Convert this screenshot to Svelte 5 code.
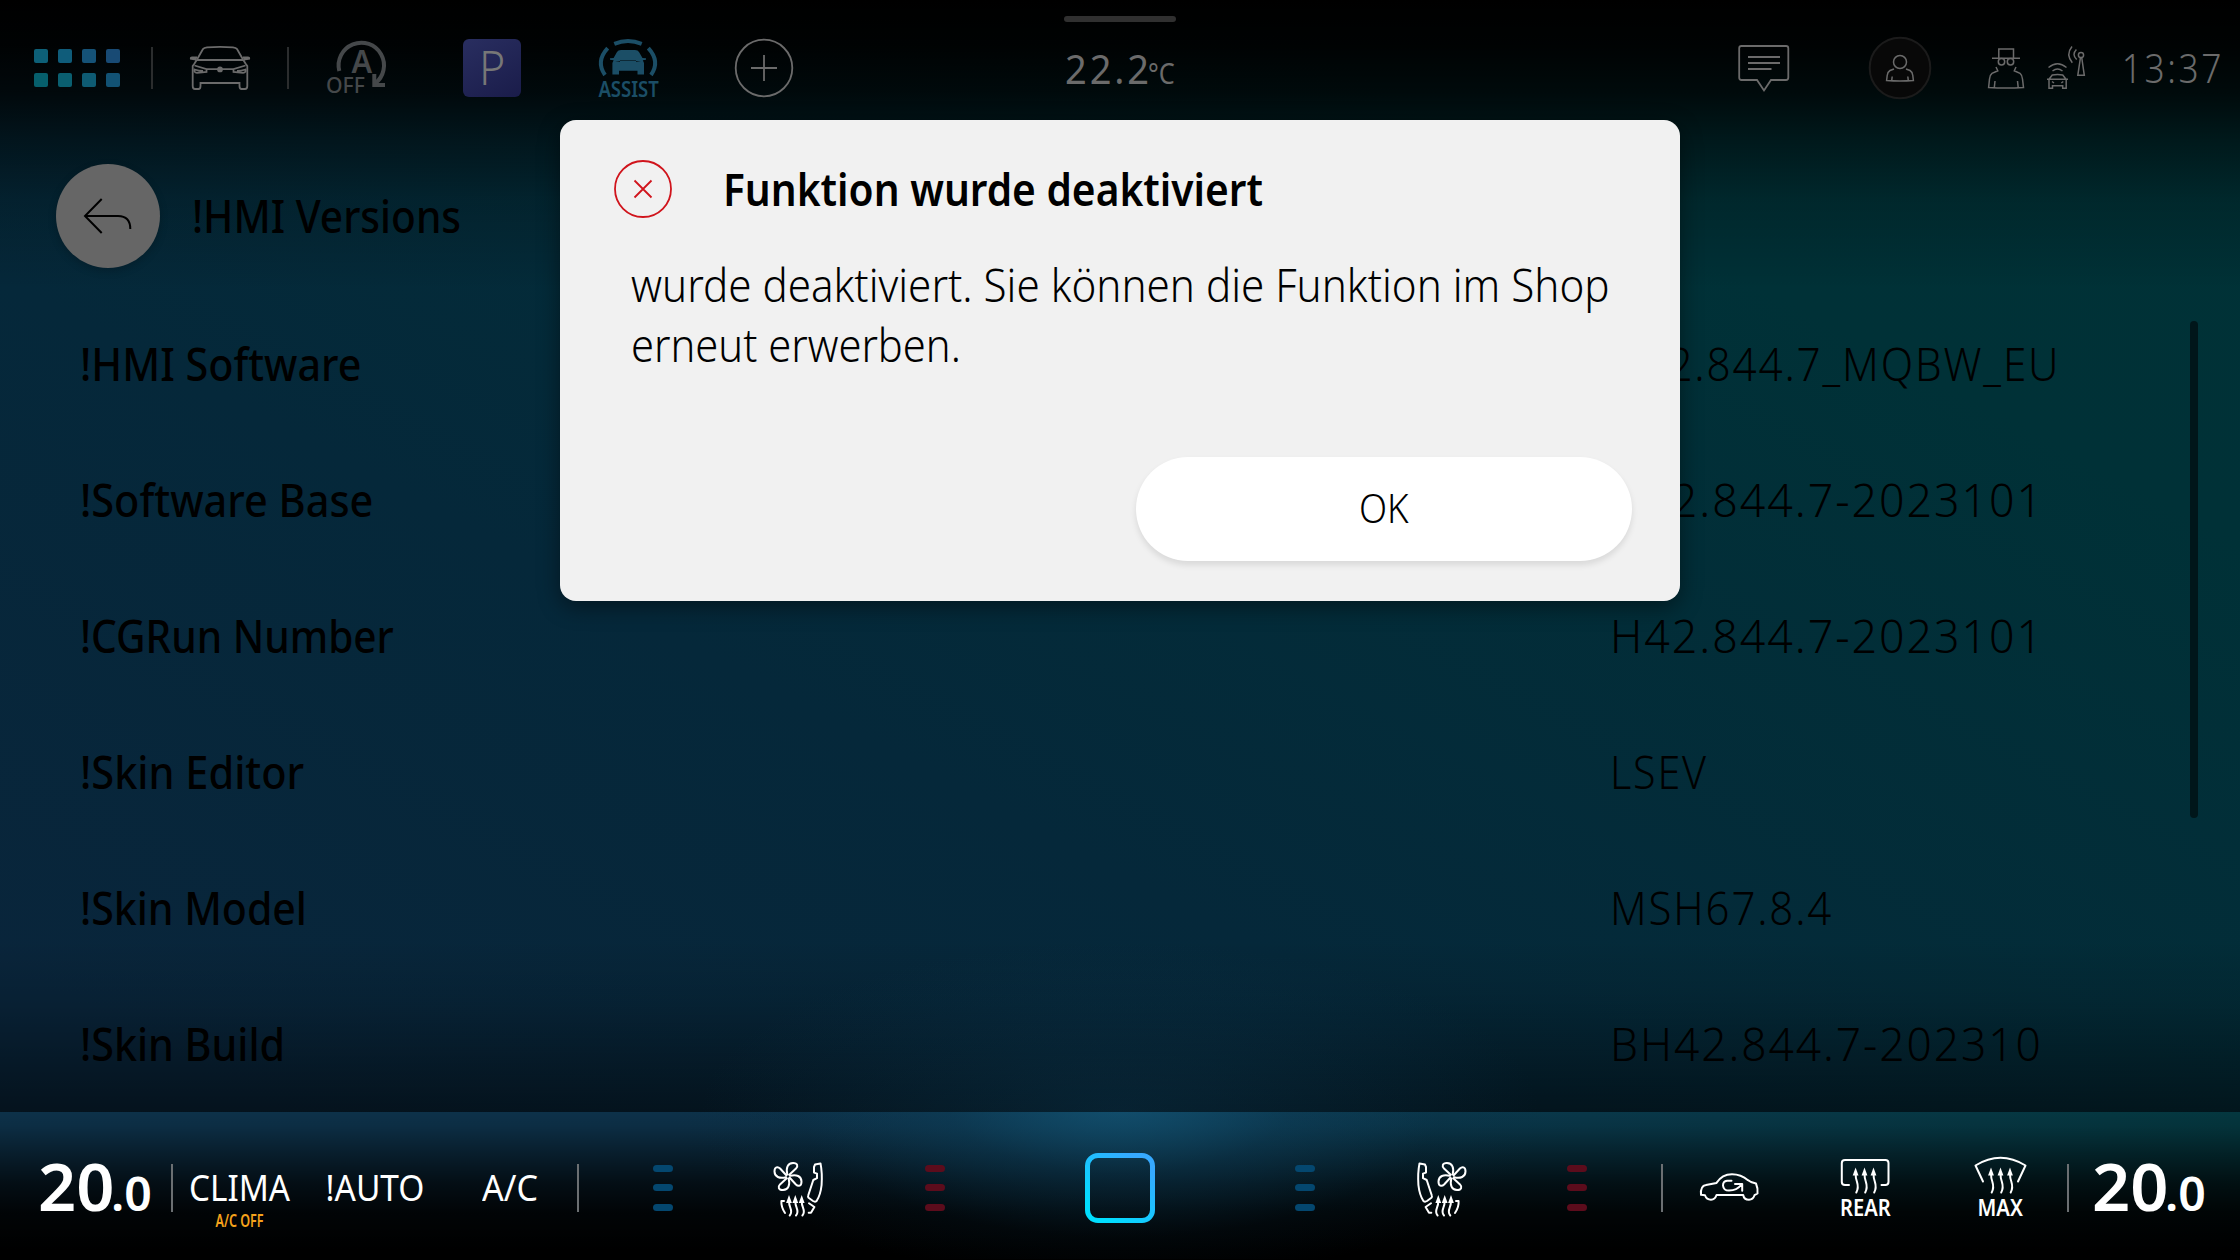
<script>
  // Scales a label horizontally so that it fills the given width.
  function fit(node, width) {
    const natural = node.offsetWidth;
    if (natural) node.style.transform = `scaleX(${width / natural})`;
  }

  const rows = [
    { label: '!HMI Software', lw: 281, value: 'H42.844.7_MQBW_EU', vw: 450 },
    { label: '!Software Base', lw: 293, value: 'H42.844.7-2023101', vw: 434 },
    { label: '!CGRun Number', lw: 314, value: 'H42.844.7-2023101', vw: 434 },
    { label: '!Skin Editor', lw: 224, value: 'LSEV', vw: 98 },
    { label: '!Skin Model', lw: 227, value: 'MSH67.8.4', vw: 223 },
    { label: '!Skin Build', lw: 205, value: 'BH42.844.7-202310', vw: 433 }
  ];
  const apps = ['#0d6078', '#0f5c7a', '#155277', '#184a74', '#065f6c', '#0a5f70', '#0e5b73', '#125274'];
</script>

{#snippet bars(color)}
  <div class="cell bars {color}"><i></i><i></i><i></i></div>
{/snippet}

{#snippet heat(x, y, h)}
  <path class="head" d="M{x} {y}l-2.9 8h5.8z" />
  <path d="M{x} {y + 6}q0 {h * 0.18} 1.3 {h * 0.32}q2 {h * 0.25} -0.6 {h - 6 - h * 0.32}" />
{/snippet}

{#snippet seat(flip)}
  <div class="cell">
    <svg class="seat" class:flip width="80" height="76" viewBox="-1 0 80 76">
      {#each [0, 90, 180, 270] as turn}
        <path transform="rotate({turn} 28 26.5)" d="M27.3 24.5C25.8 18 27.5 13.2 33 13C37.8 12.9 38.2 16.3 36 18.6L29.3 24.8" />
      {/each}
      <path d="M54 17L55 14.6L60.5 13.4Q62.4 23 61.6 35Q60.5 45 56.6 51Q55 52.3 53 51L48.6 47.8Q47.7 46.8 48.2 45.5L53.3 30L57 28.2V23.6L54 22.6Z" />
      <path d="M49 53.3L54.4 57L51 62.7H48.7M24 51H21.4Q21 57 25 63" />
      {@render heat(29, 45, 20.5)}
      {@render heat(35.3, 45, 20.5)}
      {@render heat(41.7, 45, 20.5)}
    </svg>
  </div>
{/snippet}

<div class="screen">
  <header>
    <div class="group">
      <div class="apps">
        {#each apps as c}<i style="background:{c}"></i>{/each}
      </div>
      <div class="cell ruled">
        <svg width="60" height="44" viewBox="0 0 60 44" class="line">
          <path d="M4.5 17.5L7 13.5L13 3Q14 1.5 17 1.3Q30 .4 43 1.3Q46 1.5 47 3L53 13.5L55.5 17.5L57.3 20V40Q57.3 43 55 43H51.5Q49.5 43 49.5 40V37H10.5V40Q10.5 43 8.5 43H5Q2.7 43 2.7 40V20ZM6.5 14H53.5M6 13.5L.8 12.6Q.6 11.5 2 11.5H7M54 13.5L59.2 12.6Q59.4 11.5 58 11.5H53" />
          <path d="M4.5 19.5L16.5 23.2H43.5L55.5 19.5M16.5 23.2V26L7 26.8Q3.5 26.5 4.5 23.5Q9 25 13 25M43.5 23.2V26L53 26.8Q56.5 26.5 55.5 23.5Q51 25 47 25" />
          <circle cx="30" cy="23.4" r="2.9" fill="#6b6b6b" stroke="none" />
        </svg>
      </div>
      <div class="cell ruled">
        <svg width="64" height="60" viewBox="0 0 64 60" class="auto">
          <path d="M15.3 33A22.7 22.7 0 1 1 51 45.5" />
          <path d="M50.3 36V47H61" />
          <text x="27.4" y="35.4" font-size="32.5" font-weight="600" textLength="20.6" lengthAdjust="spacingAndGlyphs">A</text>
          <text x="2" y="54.8" font-size="22" font-weight="500" textLength="39" lengthAdjust="spacingAndGlyphs">OFF</text>
        </svg>
      </div>
      <div class="cell"><div class="park"><span use:fit={26}>P</span></div></div>
      <div class="cell">
        <svg width="66" height="64" viewBox="-1 0 66 64" class="assist">
          <path class="arc" d="M18.3 7.8Q32 2.4 45.7 7.8M11.7 12.2Q-.5 25.5 9 39M52.3 12.2Q64.5 25.5 55 39" />
          <path d="M21 16Q22 14 25 14H39Q42 14 43 16L46.5 22L50 22.3V23.8L46.8 24.2L48 27V38.4H41.5V34.8H23V38.4H16.4V27L17.6 24.2L14 23.8V22.3L17.6 22ZM19 25L24 25.8V24.6H40V25.8L45 25" />
          <text x="2.4" y="61" font-size="22" font-weight="600" textLength="60.4" lengthAdjust="spacingAndGlyphs">ASSIST</text>
        </svg>
      </div>
      <div class="cell">
        <svg width="60" height="60" viewBox="0 0 60 60" class="line">
          <circle cx="30" cy="30" r="28.3" /><path d="M17 30H43M30 17V43" />
        </svg>
      </div>
    </div>

    <div class="outside">
      <i class="handle"></i>
      <div class="temp"><span class="deg" use:fit={79}>22.2</span><span class="unit" use:fit={27}>°C</span></div>
    </div>

    <div class="group end">
      <div class="cell">
        <svg width="54" height="50" viewBox="0 0 54 50" class="line">
          <path d="M4.5 3H49Q51.3 3 51.3 5.300V34.500Q51.3 37 49 37H34L27 47.500L20 37H4.500Q2.200 37 2.200 34.500V5.300Q2.200 3 4.500 3ZM11 14H43M11 20H43M11 26H34.500" />
        </svg>
      </div>
      <div class="cell">
        <svg width="64" height="64" viewBox="0 0 64 64" class="line thin">
          <circle cx="32" cy="32" r="30.300" class="disc" />
          <circle cx="32" cy="26" r="6.500" />
          <path d="M26 33L22 34.500Q19.500 36 19.200 39.500L18.600 44.500Q32 45.500 45.400 44.500L44.800 39.500Q44.500 36 42 34.500L38 33M24.200 40.500L23.700 44.700M39.800 40.500L40.300 44.700" />
        </svg>
      </div>
      <div class="cell status">
        <svg width="112" height="64" viewBox="0 0 112 64" class="line thin">
          <path d="M18.800 22V13H33.500V22M12 22.200H40" />
          <circle cx="21.500" cy="25.800" r="3.200" /><circle cx="30.500" cy="25.800" r="3.200" />
          <path d="M16 31L17.800 34.800L12 37.300Q9.700 39 9.500 43L8.600 51.600Q26 52.600 43.500 51.600L42.500 43Q42 39 40 37.300L34.300 34.800L36 31M15 45L14.300 51.500M37.500 45L38.200 51.500" />
          <path d="M68.500 31.500Q77.500 24 86.500 31.500M72.500 35Q77.500 31 82.500 35M69 43.300L72.300 39Q77.500 38 82.700 39L86 43.300M67 43.300H88M69 43.300V52.300H72.500V49.800H82.700V52.300H86.200V43.300M72 45.500L74 47M83.300 45.500L81.300 47" />
          <circle cx="101" cy="19" r="2.600" />
          <path d="M100.400 22L97.800 39.300H104.300L101.800 22M92 10.500Q85.500 18.500 92.300 26.700M96.400 13.500Q91.500 18.500 96.700 23.500" />
        </svg>
      </div>
      <div class="cell"><span class="clock" use:fit={104}>13:37</span></div>
    </div>
  </header>

  <main>
    <div class="title">
      <button class="back" aria-label="Zurück">
        <svg width="104" height="104" viewBox="0 0 104 104"><path d="M45.700 35L29 52L45.700 69M29 52H62Q74.300 52 74.300 65" /></svg>
      </button>
      <h1 use:fit={269}>!HMI Versions</h1>
    </div>
    <div class="body">
      <div class="list">
        {#each rows as row}
          <div class="row">
            <span class="label"><span use:fit={row.lw}>{row.label}</span></span>
            <span class="value"><span use:fit={row.vw}>{row.value}</span></span>
          </div>
        {/each}
      </div>
      <i class="scroll"></i>
    </div>
  </main>

  <footer>
    <div class="set"><span class="big" use:fit={75}>20</span><span class="small" use:fit={41}>.0</span></div>
    <div class="trio">
      <div class="cell word"><span use:fit={101}>CLIMA</span><em use:fit={48}>A/C OFF</em></div>
      <div class="cell word"><span use:fit={99}>!AUTO</span></div>
      <div class="cell word"><span use:fit={56}>A/C</span></div>
    </div>
    <div class="middle">
      {@render bars('blue')}
      {@render seat(false)}
      {@render bars('red')}
      <div class="home">
        <svg width="70" height="70" viewBox="0 0 70 70">
          <defs><linearGradient id="ring" x1="0.1" y1="1" x2="0.9" y2="0"><stop offset="0.1" stop-color="#00deff" /><stop offset="0.9" stop-color="#36a9ff" /></linearGradient></defs>
          <rect x="2.500" y="2.500" width="65" height="65" rx="10.500" />
        </svg>
      </div>
      {@render bars('blue')}
      {@render seat(true)}
      {@render bars('red')}
    </div>
    <div class="trio">
      <div class="cell">
        <svg width="62" height="32" viewBox="1 0 62 32" class="white">
          <path d="M3 22.800Q2.200 14 8 13L18.500 10.900Q24 2.200 34 2.200Q43 2.200 50 8.200L53 10L58 11.500Q60 16 59.500 21.500L56.500 23.200Q55 27.700 51 27.700Q46 27.700 45.200 23H18.500Q17 27.700 13 27.700Q8.500 27.700 7 23.200Z" />
          <path d="M33.500 8.800H29Q25 9.300 25 13.500Q25.500 18.600 31 18.600Q39 18.600 43.500 12.500M37 12H44.200V18.800" />
        </svg>
      </div>
      <div class="cell stack">
        <svg width="54" height="40" viewBox="0 0 54 40" class="white">
          <path d="M11 29H7Q3.800 29 3.800 26V7Q3.800 4 7 4H47.300Q50.500 4 50.500 7V26Q50.500 29 47.300 29H43.500" />
          {@render heat(17.6, 11.5, 25)}
          {@render heat(26.5, 11.5, 25)}
          {@render heat(35.5, 11.5, 25)}
        </svg>
        <b use:fit={51}>REAR</b>
      </div>
      <div class="cell stack">
        <svg width="54" height="40" viewBox="-0.500 0 54 40" class="white">
          <path d="M9.500 25.500L2 9.500Q27 -6 52 9.500L44.500 25.500" />
          {@render heat(17.5, 11.5, 25)}
          {@render heat(27, 11.5, 25)}
          {@render heat(36.5, 11.5, 25)}
        </svg>
        <b use:fit={45}>MAX</b>
      </div>
    </div>
    <div class="set right"><span class="big" use:fit={75}>20</span><span class="small" use:fit={41}>.0</span></div>
  </footer>

  <div class="dialog" role="alertdialog">
    <div class="top">
      <svg width="58" height="58" viewBox="0 0 58 58"><circle cx="29" cy="29" r="28" /><path d="M20.500 20.500L37.500 37.500M37.500 20.500L20.500 37.500" /></svg>
      <h2 use:fit={540}>Funktion wurde deaktiviert</h2>
    </div>
    <p>
      <span use:fit={979}>wurde deaktiviert. Sie können die Funktion im Shop</span>
      <span use:fit={330}>erneut erwerben.</span>
    </p>
    <div class="actions"><button class="ok"><span use:fit={50}>OK</span></button></div>
  </div>
</div>

<style>
  :global(body) { background: #000; }
  .screen {
    position: relative;
    width: 2240px;
    height: 1260px;
    overflow: hidden;
    display: flex;
    flex-direction: column;
    font-family: 'Noto Sans', 'Open Sans', sans-serif;
    color: #000;
    background:
      linear-gradient(to bottom, #000 0, rgba(0, 0, 0, .95) 45px, rgba(0, 0, 0, .8) 92px, rgba(0, 0, 0, .5) 140px, rgba(0, 0, 0, .2) 200px, rgba(0, 0, 0, 0) 290px),
      radial-gradient(ellipse 420px 170px at 1120px 1112px, rgba(14, 60, 86, .35), transparent),
      linear-gradient(to bottom, rgba(0, 0, 0, 0) 940px, rgba(0, 0, 0, .12) 1000px, rgba(0, 0, 0, .5) 1112px),
      linear-gradient(28deg, #09253b 12%, #05283a 40%, #003137 78%, #003236);
  }
  .screen > * { box-sizing: border-box; }
  span, h1, h2, em, b { white-space: nowrap; }
  svg { display: block; overflow: visible; }
  svg text { stroke: none; }
  i { display: block; }
  .cell {
    width: 136px;
    display: flex;
    align-items: center;
    justify-content: center;
    position: relative;
    flex: none;
  }

  header {
    height: 136px;
    display: grid;
    grid-template-columns: 1fr 120px 1fr;
    color: #6b6b6b;
  }
  .group { display: flex; align-items: center; }
  .group .cell { height: 136px; }
  .end { justify-content: flex-end; }
  .apps {
    width: 118px;
    padding-left: 34px;
    display: grid;
    grid-template-columns: repeat(4, 14px);
    gap: 10px;
  }
  .apps i { width: 14px; height: 14px; border-radius: 2px; }
  .ruled::before {
    content: '';
    position: absolute;
    left: -1px;
    top: 47px;
    width: 2px;
    height: 42px;
    background: #2b2d2e;
  }
  .line { fill: none; stroke: #6b6b6b; stroke-width: 1.8; }
  .thin { stroke-width: 1.5; }
  .disc { fill: #080808; stroke: #1b1b1b; stroke-width: 2; }
  .auto { fill: #45484a; }
  .auto path { fill: none; stroke: #45484a; stroke-width: 4; }
  .park {
    width: 58px;
    height: 58px;
    border-radius: 6px;
    background: linear-gradient(150deg, #292e60, #1a1c4a);
    color: #777;
    font-size: 48px;
    line-height: 56px;
    font-weight: 300;
    display: flex;
    justify-content: center;
  }
  .assist { fill: #1b4e66; fill-rule: evenodd; }
  .assist .arc { fill: none; stroke: #1b4e66; stroke-width: 4; }
  .outside { display: flex; flex-direction: column; align-items: center; }
  .handle { width: 112px; height: 6px; border-radius: 3px; background: #303030; margin-top: 16px; }
  .temp { display: flex; align-items: baseline; width: 110px; margin-top: 17px; line-height: 60px; }
  .deg { font-size: 40px; letter-spacing: 3px; width: 83px; transform-origin: left; display: inline-block; }
  .unit { font-size: 29px; transform-origin: left; display: inline-block; }
  .clock { font-size: 40px; font-weight: 300; letter-spacing: 3px; display: inline-block; padding: 0 0 1px 2px; }

  main { flex: none; height: 976px; }
  .title { height: 162px; padding: 0 0 2px 56px; box-sizing: border-box; display: flex; align-items: center; }
  .back {
    width: 104px;
    height: 104px;
    padding: 0;
    border: 0;
    border-radius: 50%;
    background: #666;
    box-shadow: 0 3px 8px rgba(0, 0, 0, .2);
  }
  .back path { fill: none; stroke: #000; stroke-width: 2; }
  h1, h2 { margin: 0; padding-bottom: 2px; font-size: 45px; font-weight: 500; transform-origin: left; }
  h1 { margin-left: 32px; }
  .body { display: flex; height: 814px; }
  .list { width: 2190px; padding-left: 80px; box-sizing: border-box; }
  .row { height: 136px; padding-bottom: 4px; box-sizing: border-box; display: grid; grid-template-columns: 1530px 1fr; align-items: center; font-size: 45px; line-height: 60px; }
  .row span span { display: inline-block; transform-origin: left; }
  .label { font-weight: 500; }
  .value { font-weight: 300; letter-spacing: 2px; }
  .scroll { width: 8px; height: 497px; margin-top: 23px; border-radius: 4px; background: #00161a; }

  footer {
    flex: none;
    height: 148px;
    padding-top: 4px;
    display: flex;
    color: #fff;
    border-bottom: 1px solid #000;
    background:
      radial-gradient(ellipse 430px 180px at 1120px -10px, rgba(20, 88, 122, .75), rgba(15, 66, 95, .42) 40%, rgba(10, 45, 66, .12) 75%, transparent),
      linear-gradient(to bottom, transparent 0, rgba(0, 0, 0, .08) 14px, rgba(0, 0, 0, .4) 42px, rgba(0, 0, 0, .72) 72px, rgba(0, 0, 0, .91) 100px, #000 138px),
      linear-gradient(to right, #0d3149, #0d3149 30%, #0a374b 65%, #04373f);
  }
  .set {
    width: 172px;
    flex: none;
    display: flex;
    align-items: baseline;
    padding-left: 38px;
    line-height: 140px;
    box-sizing: border-box;
    font-weight: 600;
  }
  .set.right { padding-left: 24px; }
  .set span { display: inline-block; transform-origin: left; }
  .big { font-size: 65px; width: 73px; }
  .small { font-size: 47px; }
  .trio, .middle { display: flex; flex: none; position: relative; }
  .trio { width: 406px; }
  .trio .cell { width: 135.33px; }
  .trio::before, .trio::after {
    content: '';
    position: absolute;
    left: -1px;
    top: 48px;
    width: 2px;
    height: 48px;
    background: #6b6f72;
  }
  .trio::after { left: 405px; }
  .middle { width: 1084px; padding: 0 17px; box-sizing: border-box; }
  .word { font-size: 36.500px; padding-bottom: 2px; box-sizing: border-box; }
  .word em {
    position: absolute;
    top: 94px;
    font-style: normal;
    font-size: 17px;
    line-height: 22px;
    font-weight: 600;
    color: #f5a21b;
  }
  .bars { flex-direction: column; gap: 12.500px; }
  .bars i { width: 20px; height: 7px; border-radius: 3.500px; }
  .blue i { background: #04476f; }
  .red i { background: #5c0c1c; }
  .home { flex: 1; display: flex; align-items: center; justify-content: center; }
  .home rect { fill: none; stroke: url(#ring); stroke-width: 5; }
  .seat, .white { fill: none; stroke: #fff; stroke-width: 2; stroke-linecap: round; stroke-linejoin: round; }
  .head { fill: #fff; stroke: none; }
  .flip { transform: scaleX(-1); }
  .stack { flex-direction: column; }
  .stack b { font-size: 22.500px; line-height: 22px; padding-top: 1px; font-weight: 600; }

  .dialog {
    position: absolute;
    left: 560px;
    top: 120px;
    width: 1120px;
    height: 481px;
    border-radius: 16px;
    background: #f1f1f1;
    box-shadow: 0 6px 22px rgba(0, 0, 0, .45);
    display: flex;
    flex-direction: column;
  }
  .top { height: 135px; padding: 3px 0 0 54px; box-sizing: border-box; display: flex; align-items: center; }
  .top svg { fill: none; stroke: #d0141c; stroke-width: 1.800; }
  h2 { margin-left: 51px; font-weight: 600; }
  p { margin: 0; padding-left: 71px; display: flex; flex-direction: column; align-items: flex-start; font-size: 45px; line-height: 60px; font-weight: 300; }
  p span { transform-origin: left; }
  .actions { margin-top: auto; padding: 0 48px 40px 0; display: flex; justify-content: flex-end; }
  .ok {
    width: 496px;
    height: 104px;
    padding: 0 0 4px;
    border: 0;
    border-radius: 52px;
    background: #fff;
    color: #000;
    font: 300 41px 'Noto Sans', sans-serif;
    box-shadow: 0 4px 6px rgba(0, 0, 0, .1);
  }
  .ok span { display: inline-block; }
</style>
